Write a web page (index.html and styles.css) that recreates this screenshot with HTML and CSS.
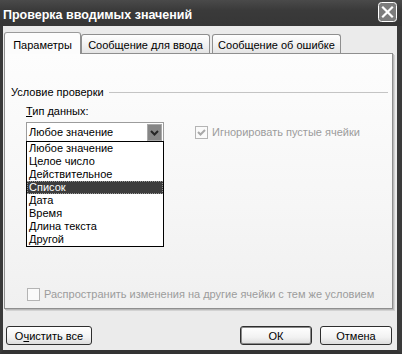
FILE: index.html
```html
<!DOCTYPE html>
<html lang="ru">
<head>
<meta charset="utf-8">
<link rel="stylesheet" href="styles.css">
</head>
<body>
<div class="window">
  <div class="titlebar">
    <span class="title">Проверка вводимых значений</span>
    <span class="close">
      <svg width="19" height="20" viewBox="0 0 19 20">
        <rect x="0.5" y="0.5" width="18" height="19" rx="3" fill="#7d7d7d" stroke="#ffffff"/>
        <path d="M5 5.5 L14 14.5 M14 5.5 L5 14.5" stroke="#ffffff" stroke-width="2.2" stroke-linecap="square"/>
      </svg>
    </span>
  </div>
  <div class="client">
    <div class="tabs">
      <div class="tab active">Параметры</div>
      <div class="tab t2">Сообщение для ввода</div>
      <div class="tab t3">Сообщение об ошибке</div>
    </div>
    <div class="panel">
      <div class="group">
        <span class="group-label">Условие проверки</span>
        <span class="rule"></span>
      </div>
      <div class="row">
        <div class="type-col">
          <div class="lbl"><u>Т</u>ип данных:</div>
          <div class="combo">
            <span class="combo-text">Любое значение</span>
            <span class="drop">
              <svg width="15" height="17" viewBox="0 0 15 17">
                <rect x="0.5" y="0.5" width="14" height="16" fill="#868686" stroke="#a9a9a9"/>
                <path d="M4 7 L7.5 10.5 L11 7" fill="none" stroke="#262626" stroke-width="2"/>
              </svg>
            </span>
            <ul class="list">
              <li>Любое значение</li>
              <li>Целое число</li>
              <li>Действительное</li>
              <li class="sel">Список</li>
              <li>Дата</li>
              <li>Время</li>
              <li>Длина текста</li>
              <li>Другой</li>
            </ul>
          </div>
        </div>
        <div class="check disabled ignore">
          <span class="box">
            <svg width="11" height="11" viewBox="0 0 11 11">
              <path d="M2 5 L4.5 7.5 L9 3" fill="none" stroke="#a8a8a8" stroke-width="2"/>
            </svg>
          </span>
          <span class="check-text">Игнорировать пустые ячейки</span>
        </div>
      </div>
      <div class="spacer"></div>
      <div class="check disabled spread">
        <span class="box"></span>
        <span class="check-text">Распространить изменения на другие ячейки с тем же условием</span>
      </div>
    </div>
    <div class="buttons">
      <div class="btn clear">О<u>ч</u>истить все</div>
      <div class="gap"></div>
      <div class="btn ok">ОК</div>
      <div class="btn cancel">Отмена</div>
    </div>
  </div>
</div>
</body>
</html>
```

FILE: styles.css
```css
* { box-sizing: border-box; }
html, body { margin: 0; padding: 0; background: #3a3a3a; }
body { font-family: "Liberation Sans", Arial, sans-serif; font-size: 11px; color: #000; }

.window {
  width: 402px;
  height: 354px;
  background: #3b3b3b;
  display: flex;
  flex-direction: column;
  border-left: 3px solid #3a3a3a;
  border-right: 5px solid #3a3a3a;
  border-bottom: 4px solid #333;
}

.titlebar {
  height: 26px;
  margin-left: -3px;
  margin-right: -5px;
  display: flex;
  align-items: flex-start;
  background: linear-gradient(#4a4a4a, #3a3a3a 40%, #363636);
}
.title {
  color: #fff;
  font-weight: bold;
  font-size: 12.5px;
  line-height: 16px;
  padding: 7px 0 0 3px;
  flex: 1;
}
.close { padding: 2px 5px 0 0; display: flex; }

.client {
  flex: 1;
  background: #ebebeb;
  display: flex;
  flex-direction: column;
  padding-top: 6px;
}

.tabs {
  height: 21px;
  display: flex;
  align-items: flex-end;
  padding-left: 1px;
  position: relative;
  z-index: 1;
}
.tab {
  height: 19px;
  width: 129px;
  border: 1px solid #8f8f8f;
  border-bottom: none;
  border-radius: 3px 3px 0 0;
  background: linear-gradient(#ffffff, #f0f0f0 60%, #e4e4e4);
  text-align: center;
  padding-top: 3px;
  line-height: 14px;
  white-space: nowrap;
}
.tab.active {
  width: 77px;
  height: 22px;
  margin-bottom: -1px;
  padding-top: 5px;
  background: #fcfcfc;
  border-top-color: #9a9a9a;
}
.tab.t3 { margin-left: 2px; }

.panel {
  height: 256px;
  width: 389px;
  margin-left: 1px;
  border: 1px solid #8f8f8f;
  box-shadow: 1px 1px 0 #b9b9b9, 2px 2px 0 #d2d2d2;
  background: linear-gradient(#fdfdfd, #f6f6f6 60%, #f0f0f0);
  display: flex;
  flex-direction: column;
  padding: 0 4px 7px 6px;
}

.group {
  margin-top: 31px;
  height: 14px;
  display: flex;
  align-items: center;
  line-height: 14px;
}
.rule {
  flex: 1;
  height: 1px;
  background: #c4c4c4;
  margin-left: 5px;
}

.row {
  display: flex;
  align-items: flex-end;
  margin-left: 15px;
  margin-top: 5px;
}
.lbl { line-height: 14px; margin-bottom: 4px; }
.combo {
  position: relative;
  width: 138px;
  height: 20px;
  border: 1px solid #9c9c9c;
  background: #fff;
  display: flex;
  align-items: center;
  padding-left: 2px;
}
.combo-text { flex: 1; line-height: 14px; }
.drop { display: flex; margin-right: 1px; }

.list {
  position: absolute;
  left: -1px;
  top: 18px;
  width: 138px;
  margin: 0;
  padding: 0;
  list-style: none;
  background: #fff;
  border: 1px solid #000;
  z-index: 2;
}
.list li {
  height: 13px;
  line-height: 13px;
  padding-left: 2px;
  white-space: nowrap;
}
.list li.sel {
  background: #3d3d3d;
  color: #fff;
  outline: 1px dotted #9a9a9a;
  outline-offset: -1px;
}

.check {
  display: flex;
  align-items: center;
  line-height: 14px;
}
.check.disabled { color: #9c9c9c; }
.box {
  width: 13px;
  height: 13px;
  border: 1px solid #b4b4b4;
  background: #fafafa;
  display: flex;
  align-items: center;
  justify-content: center;
  margin-right: 4px;
}
.ignore {
  margin-left: 31px;
  height: 20px;
}
.spacer { flex: 1; }
.spread { margin-left: 16px; }

.buttons {
  display: flex;
  margin-top: 17px;
  padding: 0 5px 0 3px;
}
.gap { flex: 1; }
.btn {
  height: 19px;
  border: 1px solid #2e2e2e;
  border-radius: 3px;
  background: linear-gradient(#ffffff, #f2f2f2 60%, #dcdcdc);
  display: flex;
  align-items: center;
  justify-content: center;
  line-height: 14px;
}
.clear { width: 86px; }
.ok { width: 72px; box-shadow: inset 0 0 0 1px #8a8a8a; }
.cancel { width: 72px; margin-left: 8px; }
```
